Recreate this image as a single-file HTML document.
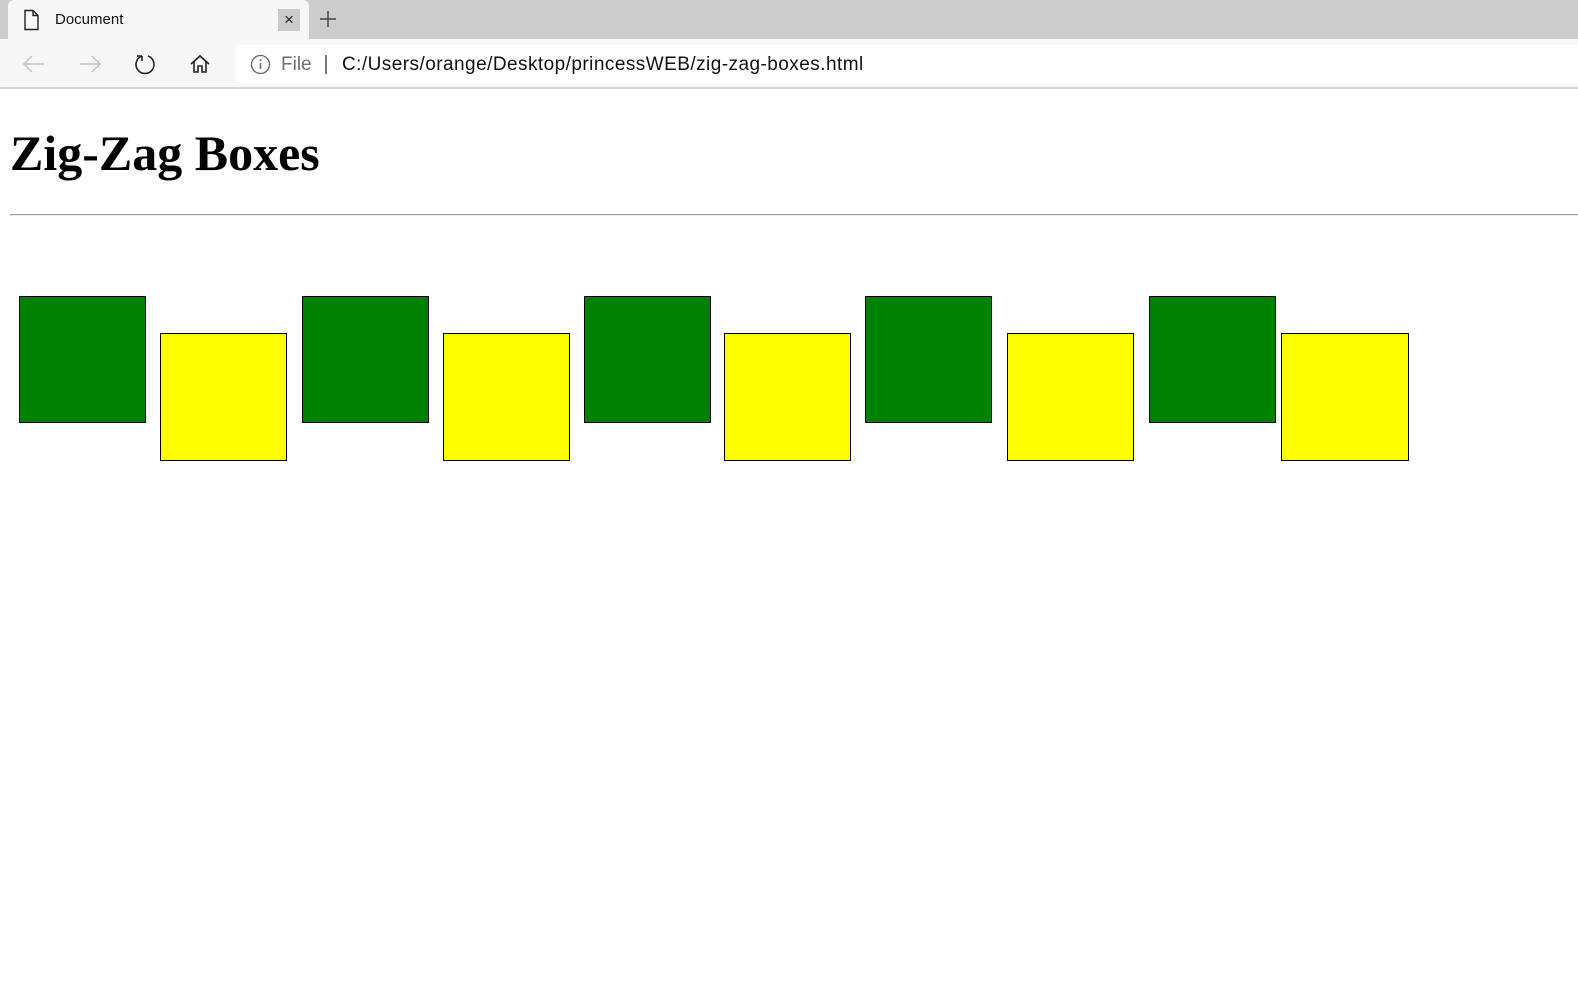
<!DOCTYPE html>
<html><head><meta charset="utf-8"><style>
*{margin:0;padding:0;box-sizing:border-box}
body{width:1578px;height:992px;background:#fff;position:relative;overflow:hidden;font-family:"Liberation Sans",sans-serif}
.a{position:absolute}
.g{position:absolute;width:127px;height:127px;border:1px solid #000;background:#008000;top:296px}
.y{position:absolute;width:128px;height:128px;border:1px solid #000;background:#ff0;top:333px}
</style></head><body>
<div class="a" style="left:0;top:0;width:1578px;height:39px;background:#cdcdcd"></div>
<div class="a" style="left:8px;top:0;width:301px;height:40px;background:#f7f7f7;border-radius:6px 6px 0 0"></div>
<svg class="a" style="left:22px;top:9px" width="20" height="22" viewBox="0 0 20 22"><path d="M3 1.5h8l5 5v14H3z M11 1.5v5h5" fill="none" stroke="#222" stroke-width="1.4"/></svg>
<div class="a" style="left:55px;top:11px;font-size:15px;color:#111">Document</div>
<div class="a" style="left:278px;top:9px;width:22px;height:22px;background:#cccccc;text-align:center;font-size:17px;line-height:21px;color:#222">×</div>
<svg class="a" style="left:318px;top:9px" width="20" height="20"><path d="M10 2v16M2 10h16" stroke="#444" stroke-width="1.5"/></svg>
<div class="a" style="left:0;top:39px;width:1578px;height:48px;background:#f7f7f7"></div>
<svg class="a" style="left:22px;top:53px" width="24" height="22"><path d="M2 11h20M10 3l-8 8 8 8" fill="none" stroke="#c4c4c4" stroke-width="1.5"/></svg>
<svg class="a" style="left:78px;top:53px" width="24" height="22"><path d="M2 11h20M14 3l8 8-8 8" fill="none" stroke="#c4c4c4" stroke-width="1.5"/></svg>
<svg class="a" style="left:133px;top:52px" width="24" height="24"><path d="M9 4A9 9 0 1 0 15 4" fill="none" stroke="#222" stroke-width="1.6"/><path d="M9 4V9M9 4H4" fill="none" stroke="#222" stroke-width="1.6"/></svg>
<svg class="a" style="left:189px;top:53px" width="22" height="22"><path d="M2 11L11 3l9 8M5 9v10h4v-6h4v6h4V9" fill="none" stroke="#222" stroke-width="1.6"/></svg>
<div class="a" style="left:236px;top:45px;width:1342px;height:38px;background:#fff;border-radius:4px 0 0 4px"></div>
<svg class="a" style="left:250px;top:54px" width="21" height="21"><circle cx="10.5" cy="10.5" r="9" fill="none" stroke="#666" stroke-width="1.3"/><path d="M10.5 9v6" stroke="#666" stroke-width="1.5"/><circle cx="10.5" cy="6.3" r="1" fill="#666"/></svg>
<div class="a" style="left:281px;top:54px;font-size:19px;color:#6e6e6e">File</div>
<div class="a" style="left:325px;top:55px;width:1.5px;height:19px;background:#777"></div>
<div class="a" style="left:342px;top:54px;font-size:19px;color:#111;letter-spacing:0.45px">C:/Users/orange/Desktop/princessWEB/zig-zag-boxes.html</div>
<div class="a" style="left:0;top:87px;width:1578px;height:2px;background:#d4d4d4"></div>
<div class="a" style="left:10px;top:120px;font-family:'Liberation Serif',serif;font-weight:bold;font-size:50px;line-height:66px;color:#000">Zig-Zag Boxes</div>
<div class="a" style="left:10px;top:214px;width:1568px;height:2px;border-top:1px solid #a0a0a0;border-left:1px solid #a0a0a0;border-bottom:1px solid #eee"></div>
<div class="g" style="left:19px"></div><div class="y" style="left:160px;width:127px"></div>
<div class="g" style="left:302px"></div><div class="y" style="left:443px;width:127px"></div>
<div class="g" style="left:584px"></div><div class="y" style="left:724px;width:127px"></div>
<div class="g" style="left:865px"></div><div class="y" style="left:1007px;width:127px"></div>
<div class="g" style="left:1149px"></div><div class="y" style="left:1281px"></div>
</body></html>
